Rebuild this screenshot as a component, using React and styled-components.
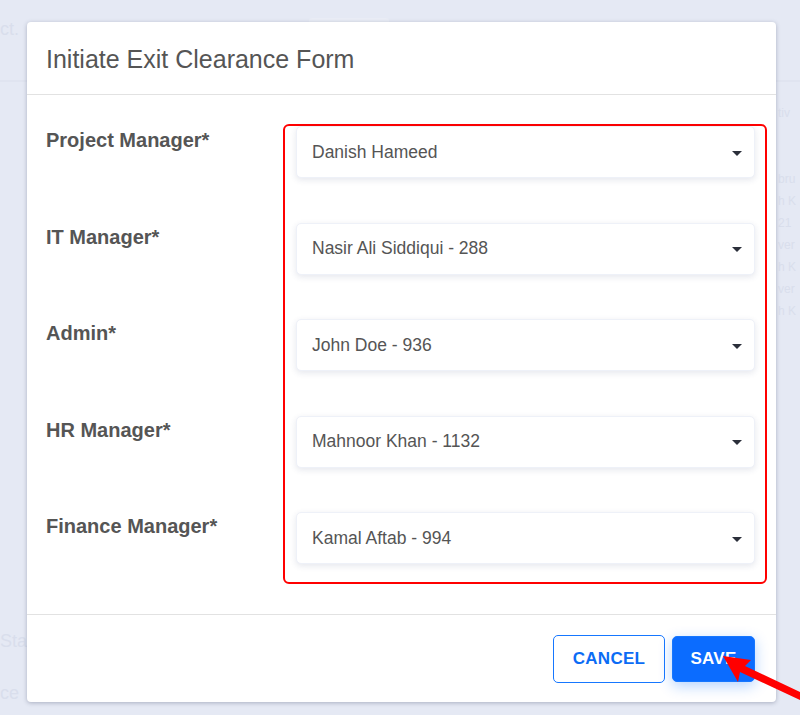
import React from "react";
import styled, { createGlobalStyle } from "styled-components";

const Global = createGlobalStyle`
  html, body { margin: 0; padding: 0; }
  body { background: #e5e9f4; font-family: "Liberation Sans", Arial, sans-serif; }
`;

const Page = styled.div`
  position: relative;
  width: 800px;
  height: 715px;
  overflow: hidden;
  background: #e5e9f4;
`;

const TopBar = styled.div`
  height: 82px;
  display: flex;
  align-items: flex-start;
  gap: 290px;
  border-bottom: 2px solid #e0e4f0;
  padding-top: 18px;
  box-sizing: border-box;
`;

const Faint = styled.span`
  color: #d9deec;
  font-size: ${(p) => (p.$small ? "12px" : "18px")};
  line-height: 22px;
  white-space: nowrap;
`;

const FaintTab = styled.div`
  width: 80px;
  height: 14px;
  background: #eaedf6;
  border-radius: 3px;
`;

const PageBody = styled.div`
  display: flex;
  justify-content: space-between;
  padding-top: 20px;
`;

const LeftCol = styled.div`
  display: flex;
  flex-direction: column;
  gap: 30px;
  padding-top: 528px;
`;

const RightCol = styled.div`
  display: flex;
  flex-direction: column;
  width: 21px;
  padding-right: 1px;
`;

const Modal = styled.div`
  position: absolute;
  left: 27px;
  top: 22px;
  width: 749px;
  height: 680px;
  background: #fff;
  border-radius: 4px;
  box-shadow: 0 1px 4px rgba(60, 70, 100, 0.35);
  display: flex;
  flex-direction: column;
`;

const Header = styled.div`
  height: 73px;
  display: flex;
  align-items: center;
  padding: 2px 19px 0;
  border-bottom: 1px solid #e2e2e2;
  box-sizing: border-box;
`;

const Title = styled.h2`
  margin: 0;
  font-weight: 400;
  font-size: 25px;
  color: #555;
`;

const Body = styled.div`
  flex: 1;
  display: flex;
  padding: 29px 9px 0 19px;
`;

const LabelCol = styled.div`
  width: 237px;
  display: flex;
  flex-direction: column;
  gap: 44.5px;
  padding-top: 1px;
`;

const Label = styled.div`
  height: 52px;
  font-weight: 700;
  font-size: 20px;
  color: #555;
  line-height: 24px;
  padding-top: 3px;
  box-sizing: border-box;
`;

const SelectGroup = styled.div`
  width: 484px;
  height: 460px;
  box-sizing: border-box;
  border: 2px solid #ff0000;
  border-radius: 6px;
  padding: 0 10px 0 11px;
  display: flex;
  flex-direction: column;
  gap: 44.5px;
`;

const Select = styled.div`
  height: 52px;
  box-sizing: border-box;
  background: #fff;
  border: 1px solid #eef1f8;
  border-radius: 5px;
  box-shadow: 0 2px 6px rgba(40, 60, 110, 0.12);
  display: flex;
  align-items: center;
  justify-content: space-between;
  padding: 0 12px 0 15px;
  font-size: 17.5px;
  color: #555;
`;

const Caret = styled.span`
  width: 0;
  height: 0;
  border-left: 5px solid transparent;
  border-right: 5px solid transparent;
  border-top: 5px solid #2b2f3a;
  margin-top: 2px;
`;

const Footer = styled.div`
  height: 88px;
  border-top: 1px solid #e2e2e2;
  display: flex;
  align-items: center;
  justify-content: flex-end;
  gap: 7px;
  padding: 0 21px 0 0;
  box-sizing: border-box;
`;

const Button = styled.button`
  font-family: "Liberation Sans", Arial, sans-serif;
  font-weight: 700;
  font-size: 17px;
  letter-spacing: 0.3px;
  border-radius: 5px;
  cursor: pointer;
  height: ${(p) => (p.$primary ? "46px" : "48px")};
  width: ${(p) => (p.$primary ? "83px" : "112px")};
  border: 1px solid #1677ff;
  color: ${(p) => (p.$primary ? "#fff" : "#0b6cf5")};
  background: ${(p) => (p.$primary ? "#0b6cff" : "#fff")};
  box-shadow: ${(p) => (p.$primary ? "0 4px 14px rgba(11,108,255,0.3)" : "none")};
`;

const ArrowSvg = styled.svg`
  position: absolute;
  left: 0;
  top: 0;
  pointer-events: none;
`;

const rows = [
  ["Project Manager*", "Danish Hameed"],
  ["IT Manager*", "Nasir Ali Siddiqui - 288"],
  ["Admin*", "John Doe - 936"],
  ["HR Manager*", "Mahnoor Khan - 1132"],
  ["Finance Manager*", "Kamal Aftab - 994"],
];

const faintRight = ["tiv", "", "", "bru", "h K", "21", "ver", "h K", "ver", "h K"];

export default function App() {
  return (
    <Page>
      <Global />
      <TopBar>
        <Faint>ct.</Faint>
        <FaintTab />
      </TopBar>
      <PageBody>
        <LeftCol>
          <Faint>Sta</Faint>
          <Faint>ce</Faint>
        </LeftCol>
        <RightCol>
          {faintRight.map((t, i) => (
            <Faint $small key={i}>
              {t || "\u00a0"}
            </Faint>
          ))}
        </RightCol>
      </PageBody>

      <Modal>
        <Header>
          <Title>Initiate Exit Clearance Form</Title>
        </Header>
        <Body>
          <LabelCol>
            {rows.map(([l]) => (
              <Label key={l}>{l}</Label>
            ))}
          </LabelCol>
          <SelectGroup>
            {rows.map(([l, v]) => (
              <Select key={l}>
                <span>{v}</span>
                <Caret />
              </Select>
            ))}
          </SelectGroup>
        </Body>
        <Footer>
          <Button>CANCEL</Button>
          <Button $primary>SAVE</Button>
        </Footer>
      </Modal>

      <ArrowSvg width="800" height="715" viewBox="0 0 800 715">
        <polygon
          points="723,656 751,660 745,666 800,692 800,700 740,672 738,682"
          fill="#ff0000"
        />
      </ArrowSvg>
    </Page>
  );
}
